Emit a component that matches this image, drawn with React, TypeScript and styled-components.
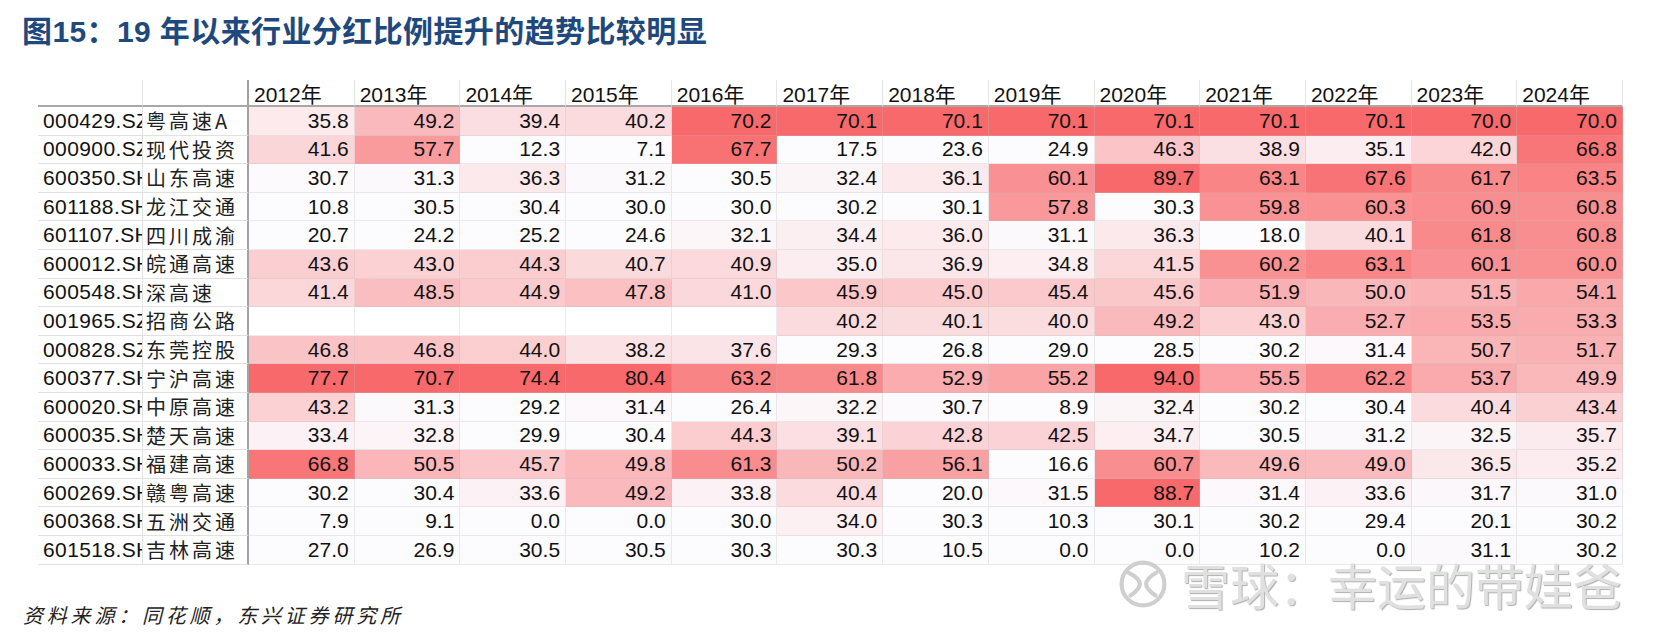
import React from "react";
import styled, { createGlobalStyle } from "styled-components";

type RowData = {
  code: string;
  name: string;
  values: (number | null)[];
};

const years = [2012, 2013, 2014, 2015, 2016, 2017, 2018, 2019, 2020, 2021, 2022, 2023, 2024];

const rows: RowData[] = [
  { code: "000429.SZ", name: "粤高速A", values: [35.8, 49.2, 39.4, 40.2, 70.2, 70.1, 70.1, 70.1, 70.1, 70.1, 70.1, 70.0, 70.0] },
  { code: "000900.SZ", name: "现代投资", values: [41.6, 57.7, 12.3, 7.1, 67.7, 17.5, 23.6, 24.9, 46.3, 38.9, 35.1, 42.0, 66.8] },
  { code: "600350.SH", name: "山东高速", values: [30.7, 31.3, 36.3, 31.2, 30.5, 32.4, 36.1, 60.1, 89.7, 63.1, 67.6, 61.7, 63.5] },
  { code: "601188.SH", name: "龙江交通", values: [10.8, 30.5, 30.4, 30.0, 30.0, 30.2, 30.1, 57.8, 30.3, 59.8, 60.3, 60.9, 60.8] },
  { code: "601107.SH", name: "四川成渝", values: [20.7, 24.2, 25.2, 24.6, 32.1, 34.4, 36.0, 31.1, 36.3, 18.0, 40.1, 61.8, 60.8] },
  { code: "600012.SH", name: "皖通高速", values: [43.6, 43.0, 44.3, 40.7, 40.9, 35.0, 36.9, 34.8, 41.5, 60.2, 63.1, 60.1, 60.0] },
  { code: "600548.SH", name: "深高速", values: [41.4, 48.5, 44.9, 47.8, 41.0, 45.9, 45.0, 45.4, 45.6, 51.9, 50.0, 51.5, 54.1] },
  { code: "001965.SZ", name: "招商公路", values: [null, null, null, null, null, 40.2, 40.1, 40.0, 49.2, 43.0, 52.7, 53.5, 53.3] },
  { code: "000828.SZ", name: "东莞控股", values: [46.8, 46.8, 44.0, 38.2, 37.6, 29.3, 26.8, 29.0, 28.5, 30.2, 31.4, 50.7, 51.7] },
  { code: "600377.SH", name: "宁沪高速", values: [77.7, 70.7, 74.4, 80.4, 63.2, 61.8, 52.9, 55.2, 94.0, 55.5, 62.2, 53.7, 49.9] },
  { code: "600020.SH", name: "中原高速", values: [43.2, 31.3, 29.2, 31.4, 26.4, 32.2, 30.7, 8.9, 32.4, 30.2, 30.4, 40.4, 43.4] },
  { code: "600035.SH", name: "楚天高速", values: [33.4, 32.8, 29.9, 30.4, 44.3, 39.1, 42.8, 42.5, 34.7, 30.5, 31.2, 32.5, 35.7] },
  { code: "600033.SH", name: "福建高速", values: [66.8, 50.5, 45.7, 49.8, 61.3, 50.2, 56.1, 16.6, 60.7, 49.6, 49.0, 36.5, 35.2] },
  { code: "600269.SH", name: "赣粤高速", values: [30.2, 30.4, 33.6, 49.2, 33.8, 40.4, 20.0, 31.5, 88.7, 31.4, 33.6, 31.7, 31.0] },
  { code: "600368.SH", name: "五洲交通", values: [7.9, 9.1, 0.0, 0.0, 30.0, 34.0, 30.3, 10.3, 30.1, 30.2, 29.4, 20.1, 30.2] },
  { code: "601518.SH", name: "吉林高速", values: [27.0, 26.9, 30.5, 30.5, 30.3, 30.3, 10.5, 0.0, 0.0, 10.2, 0.0, 31.1, 30.2] },
];

// excel-style colour scale: white below ~30, full red from ~70
function heat(v: number | null) {
  if (v === null) return "#ffffff";
  const t = Math.pow(Math.min(1, Math.max(0, (v - 30) / 40)), 1.1);
  const lo = [252, 252, 255];
  const hi = [248, 105, 107];
  const c = lo.map((l, i) => Math.round(l + (hi[i] - l) * t));
  return `rgb(${c[0]}, ${c[1]}, ${c[2]})`;
}

export default function App() {
  return (
    <Page>
      <GlobalStyle />
      <Title>图15：19 年以来行业分红比例提升的趋势比较明显</Title>
      <Table>
        <Row $head>
          <HeadCell />
          <HeadCell $divider />
          {years.map((y) => (
            <HeadCell key={y}>{y}年</HeadCell>
          ))}
        </Row>
        {rows.map((r) => (
          <Row key={r.code}>
            <CodeCell>{r.code}</CodeCell>
            <NameCell>{r.name}</NameCell>
            {r.values.map((v, i) => (
              <ValueCell key={i} $bg={heat(v)}>
                {v === null ? "" : v.toFixed(1)}
              </ValueCell>
            ))}
          </Row>
        ))}
      </Table>
      <Source>资料来源：同花顺，东兴证券研究所</Source>
      <Watermark>
        <svg width="48" height="48" viewBox="0 0 46 46" fill="none">
          <circle cx="23" cy="23" r="20.5" stroke="#cfcfcf" strokeWidth="4" />
          <path d="M9 12 C17 16 20 20 20 23 C20 26 17 30 11 34" stroke="#cfcfcf" strokeWidth="4" strokeLinecap="round" />
          <path d="M36 12 C29 16 26 20 26 23 C26 26 29 30 35 34" stroke="#cfcfcf" strokeWidth="4" strokeLinecap="round" />
        </svg>
        <WatermarkText>雪球：幸运的带娃爸</WatermarkText>
      </Watermark>
    </Page>
  );
}

const GlobalStyle = createGlobalStyle`
  html, body {
    margin: 0;
    padding: 0;
    background: #ffffff;
  }
  body {
    font-family: "Liberation Sans", "Noto Sans CJK SC", sans-serif;
    color: #111111;
  }
`;

const Page = styled.div`
  position: relative;
  width: 1662px;
  height: 642px;
  overflow: hidden;
  background: #ffffff;
`;

const Title = styled.h1`
  margin: 0;
  padding: 14px 0 0 22px;
  font-family: "Liberation Sans", "Noto Sans CJK SC", sans-serif;
  font-size: 30px;
  line-height: 36px;
  font-weight: 700;
  color: #1f497d;
  letter-spacing: 0.4px;
`;

const Table = styled.div`
  margin: 30px 0 0 38px;
  display: flex;
  flex-direction: column;
`;

const Row = styled.div<{ $head?: boolean }>`
  display: grid;
  grid-template-columns: 105px 106px repeat(13, 105.7px);
  height: ${(p) => (p.$head ? "27px" : "28.6px")};
`;

const CellBase = styled.div`
  display: flex;
  align-items: center;
  box-sizing: border-box;
  overflow: hidden;
  white-space: nowrap;
  font-size: 21px;
`;

const HeadCell = styled(CellBase)<{ $divider?: boolean }>`
  padding-left: 5px;
  border-bottom: 2px solid #a8a8a8;
  border-right: ${(p) => (p.$divider ? "2px solid #a3a3a3" : "1px solid #e4e4e4")};
`;

const CodeCell = styled(CellBase)`
  padding-left: 5px;
  letter-spacing: 0.4px;
  border-right: 1px solid #e1e1e1;
  border-bottom: 1px solid #e1e1e1;
`;

const NameCell = styled(CellBase)`
  padding-left: 3px;
  font-family: "Noto Sans CJK SC", sans-serif;
  font-size: 20px;
  letter-spacing: 3px;
  color: #222222;
  border-right: 2px solid #a3a3a3;
  border-bottom: 1px solid #e1e1e1;
`;

const ValueCell = styled(CellBase)<{ $bg: string }>`
  justify-content: flex-end;
  padding-right: 5px;
  background: ${(p) => p.$bg};
  border-right: 1px solid rgba(190, 190, 190, 0.3);
  border-bottom: 1px solid rgba(190, 190, 190, 0.3);
`;

const Source = styled.p`
  margin: 38px 0 0 23px;
  font-family: "Noto Sans CJK SC", sans-serif;
  font-style: italic;
  font-size: 20px;
  line-height: 24px;
  letter-spacing: 3.8px;
  color: #222222;
`;

const Watermark = styled.div`
  position: absolute;
  left: 1119px;
  top: 560px;
  display: flex;
  align-items: center;
  gap: 14px;
`;

const WatermarkText = styled.span`
  font-family: "Noto Sans CJK SC", sans-serif;
  font-size: 49px;
  line-height: 48px;
  color: #e0e0e0;
  text-shadow: 1px 1px 1px rgba(0, 0, 0, 0.32);
`;
